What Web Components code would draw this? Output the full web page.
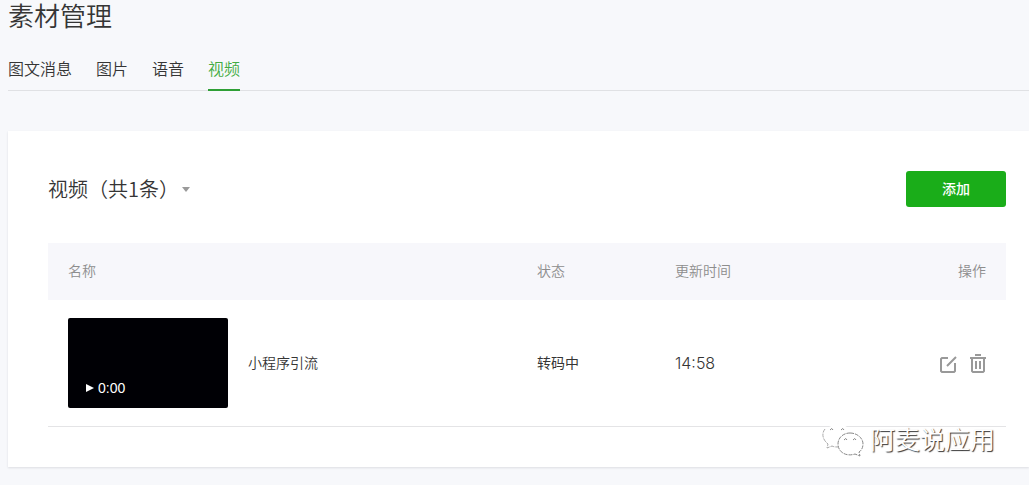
<!DOCTYPE html>
<html lang="zh-CN">
<head>
<meta charset="utf-8">
<title>素材管理</title>
<style>
  body {
    margin: 0;
    min-height: 100vh;
    background: #f7f8fb;
    color: #353535;
    font: 14px/20px "Liberation Sans", "Noto Sans CJK SC", sans-serif;
  }
</style>
</head>
<body>
<material-page>
  <material-tabs slot="tabs" items="图文消息,图片,语音,视频" current="视频"></material-tabs>
  <material-card>
    <filter-title slot="title">视频（共1条）</filter-title>
    <primary-button slot="action">添加</primary-button>
    <video-table></video-table>
    <account-mark slot="mark">阿麦说应用</account-mark>
  </material-card>
</material-page>

<script>
class MaterialPage extends HTMLElement {
  constructor() {
    super();
    this.attachShadow({ mode: "open" }).innerHTML = `
      <style>
        :host {
          display: block;
          padding-left: 8px;
        }
        h1 {
          margin: 0 0 22px;
          font-size: 26px;
          font-weight: 350;
          line-height: 34px;
        }
        main {
          margin-top: 40px;
        }
      </style>
      <h1>素材管理</h1>
      <slot name="tabs"></slot>
      <main><slot></slot></main>
    `;
  }
}

class MaterialTabs extends HTMLElement {
  connectedCallback() {
    const current = this.getAttribute("current");
    const links = this.getAttribute("items").split(",").map((name) =>
      `<a href="#"${name === current ? ' aria-current="page"' : ""}>${name}</a>`
    ).join("");
    this.attachShadow({ mode: "open" }).innerHTML = `
      <style>
        :host {
          display: block;
        }
        nav {
          display: flex;
          gap: 24px;
          box-shadow: inset 0 -1px #e0e1e4;
        }
        a {
          padding-bottom: 5px;
          border-bottom: 2px solid transparent;
          color: inherit;
          font-size: 16px;
          font-weight: 350;
          line-height: 28px;
          text-decoration: none;
        }
        a[aria-current] {
          border-color: #2f9f36;
          color: #43ac43;
        }
      </style>
      <nav>${links}</nav>
    `;
  }
}

class MaterialCard extends HTMLElement {
  constructor() {
    super();
    this.attachShadow({ mode: "open" }).innerHTML = `
      <style>
        :host {
          display: block;
          position: relative;
          padding: 40px 23px 40px 40px;
          background: #fff;
          box-shadow: 0 1px 2px #dcdde2;
        }
        header {
          display: flex;
          align-items: center;
          justify-content: space-between;
          margin-bottom: 36px;
        }
      </style>
      <header>
        <slot name="title"></slot>
        <slot name="action"></slot>
      </header>
      <slot></slot>
      <slot name="mark"></slot>
    `;
  }
}

class FilterTitle extends HTMLElement {
  constructor() {
    super();
    this.attachShadow({ mode: "open" }).innerHTML = `
      <style>
        :host {
          display: block;
        }
        button {
          display: flex;
          align-items: center;
          gap: 3px;
          padding: 0;
          border: 0;
          background: none;
          color: inherit;
          font: 350 20px/28px "Noto Sans CJK SC", sans-serif;
        }
        i {
          border: 4px solid transparent;
          border-top: 5px solid #9a9a9a;
          border-bottom: 0;
        }
      </style>
      <button type="button" aria-haspopup="true"><span><slot></slot></span><i></i></button>
    `;
  }
}

class PrimaryButton extends HTMLElement {
  constructor() {
    super();
    this.attachShadow({ mode: "open" }).innerHTML = `
      <style>
        :host {
          display: block;
        }
        button {
          display: block;
          width: 100px;
          height: 36px;
          padding: 0;
          border: 0;
          border-radius: 3px;
          background: #1aad19;
          color: #fff;
          font: inherit;
          font-weight: 500;
        }
      </style>
      <button type="button"><slot></slot></button>
    `;
  }
}

class VideoThumb extends HTMLElement {
  constructor() {
    super();
    this.attachShadow({ mode: "open" }).innerHTML = `
      <style>
        :host {
          display: flex;
          align-items: flex-end;
          box-sizing: border-box;
          width: 160px;
          height: 90px;
          padding: 10px 18px;
          border-radius: 2px;
          background: #000005;
          color: #fff;
        }
        span {
          display: flex;
          align-items: center;
          gap: 4px;
        }
        svg {
          display: block;
        }
      </style>
      <span>
        <svg width="8" height="8" viewBox="0 0 8 8" fill="#fff"><path d="M0 0l8 4-8 4z"/></svg>
        <slot></slot>
      </span>
    `;
  }
}

class VideoTable extends HTMLElement {
  constructor() {
    super();
    this.attachShadow({ mode: "open" }).innerHTML = `
      <style>
        :host {
          display: block;
        }
        table {
          width: 100%;
          table-layout: fixed;
          border-collapse: separate;
          border-spacing: 0;
        }
        th {
          padding: 18px 0 19px 20px;
          background: #f7f7fb;
          color: #8d8d8d;
          font-weight: 350;
          text-align: left;
        }
        .status {
          width: 118px;
        }
        .time {
          width: 180px;
        }
        .ops {
          width: 111px;
          padding-right: 20px;
          text-align: right;
        }
        td {
          padding: 18px 0 18px 20px;
          border-bottom: 1px solid #e4e4e6;
        }
        td:last-child {
          padding-right: 20px;
        }
        td.clock {
          font: 300 16px/20px Inter, sans-serif;
        }
        .name,
        .tools {
          display: flex;
          align-items: center;
          gap: 20px;
          font-weight: 350;
        }
        .tools {
          justify-content: flex-end;
          gap: 12px;
        }
        button {
          padding: 0;
          border: 0;
          background: none;
        }
        svg {
          display: block;
          fill: none;
          stroke: #999;
          stroke-width: 2;
        }
      </style>
      <table>
        <thead>
          <tr>
            <th>名称</th>
            <th class="status">状态</th>
            <th class="time">更新时间</th>
            <th class="ops">操作</th>
          </tr>
        </thead>
        <tbody>
          <tr>
            <td>
              <div class="name"><video-thumb>0:00</video-thumb>小程序引流</div>
            </td>
            <td>转码中</td>
            <td class="clock">14:58</td>
            <td>
              <div class="tools">
                <button type="button" aria-label="编辑">
                  <svg width="18" height="20" viewBox="0 0 18 20">
                    <path d="M8 5H2L1 6v12l1 1h12l1-1v-8M7 13L16 4"/>
                  </svg>
                </button>
                <button type="button" aria-label="删除">
                  <svg width="16" height="20" viewBox="0 0 16 20">
                    <path d="M0 5h16M5 2h6M2 5v13l1 1h10l1-1V5M6 8v8M10 8v8"/>
                  </svg>
                </button>
              </div>
            </td>
          </tr>
        </tbody>
      </table>
    `;
  }
}

class AccountMark extends HTMLElement {
  constructor() {
    super();
    this.attachShadow({ mode: "open" }).innerHTML = `
      <style>
        /* lies over the bottom corner of the card */
        :host {
          position: absolute;
          right: 34px;
          bottom: 9px;
          display: flex;
          align-items: center;
          gap: 6px;
          color: #fff;
          font-size: 25px;
          font-weight: 350;
          line-height: 36px;
          text-shadow: 1px 1px 1px #333;
        }
        svg {
          display: block;
          fill: none;
          stroke-dasharray: 4 1;
        }
      </style>
      <svg width="42" height="34" viewBox="0 0 42 34">
        <path d="M6 21C-2 14 1 3 14 2c9-1 15 4 16 8-9 0-17 7-14 14-3 0-5 0-6-1l-5 2z" fill="#fff"/>
        <path d="M3 6C-1 11 1 17 6 21l-1 4 5-2c2 1 4 1 6 1" stroke="#aaa"/>
        <path d="M28 10c7 0 13 5 13 11 0 4-2 7-4 8l1 4-5-2c-9 3-17-2-17-10 0-6 5-11 12-11z" fill="#fff" stroke="#888"/>
        <path d="M8 7q2-3 3 0M19 7q2-3 3 0M22 17q2-3 3 0M31 17q2-3 3 0" stroke="#888" stroke-dasharray="none"/>
      </svg>
      <span><slot></slot></span>
    `;
  }
}

customElements.define("material-page", MaterialPage);
customElements.define("material-tabs", MaterialTabs);
customElements.define("material-card", MaterialCard);
customElements.define("filter-title", FilterTitle);
customElements.define("primary-button", PrimaryButton);
customElements.define("video-thumb", VideoThumb);
customElements.define("video-table", VideoTable);
customElements.define("account-mark", AccountMark);
</script>
</body>
</html>
